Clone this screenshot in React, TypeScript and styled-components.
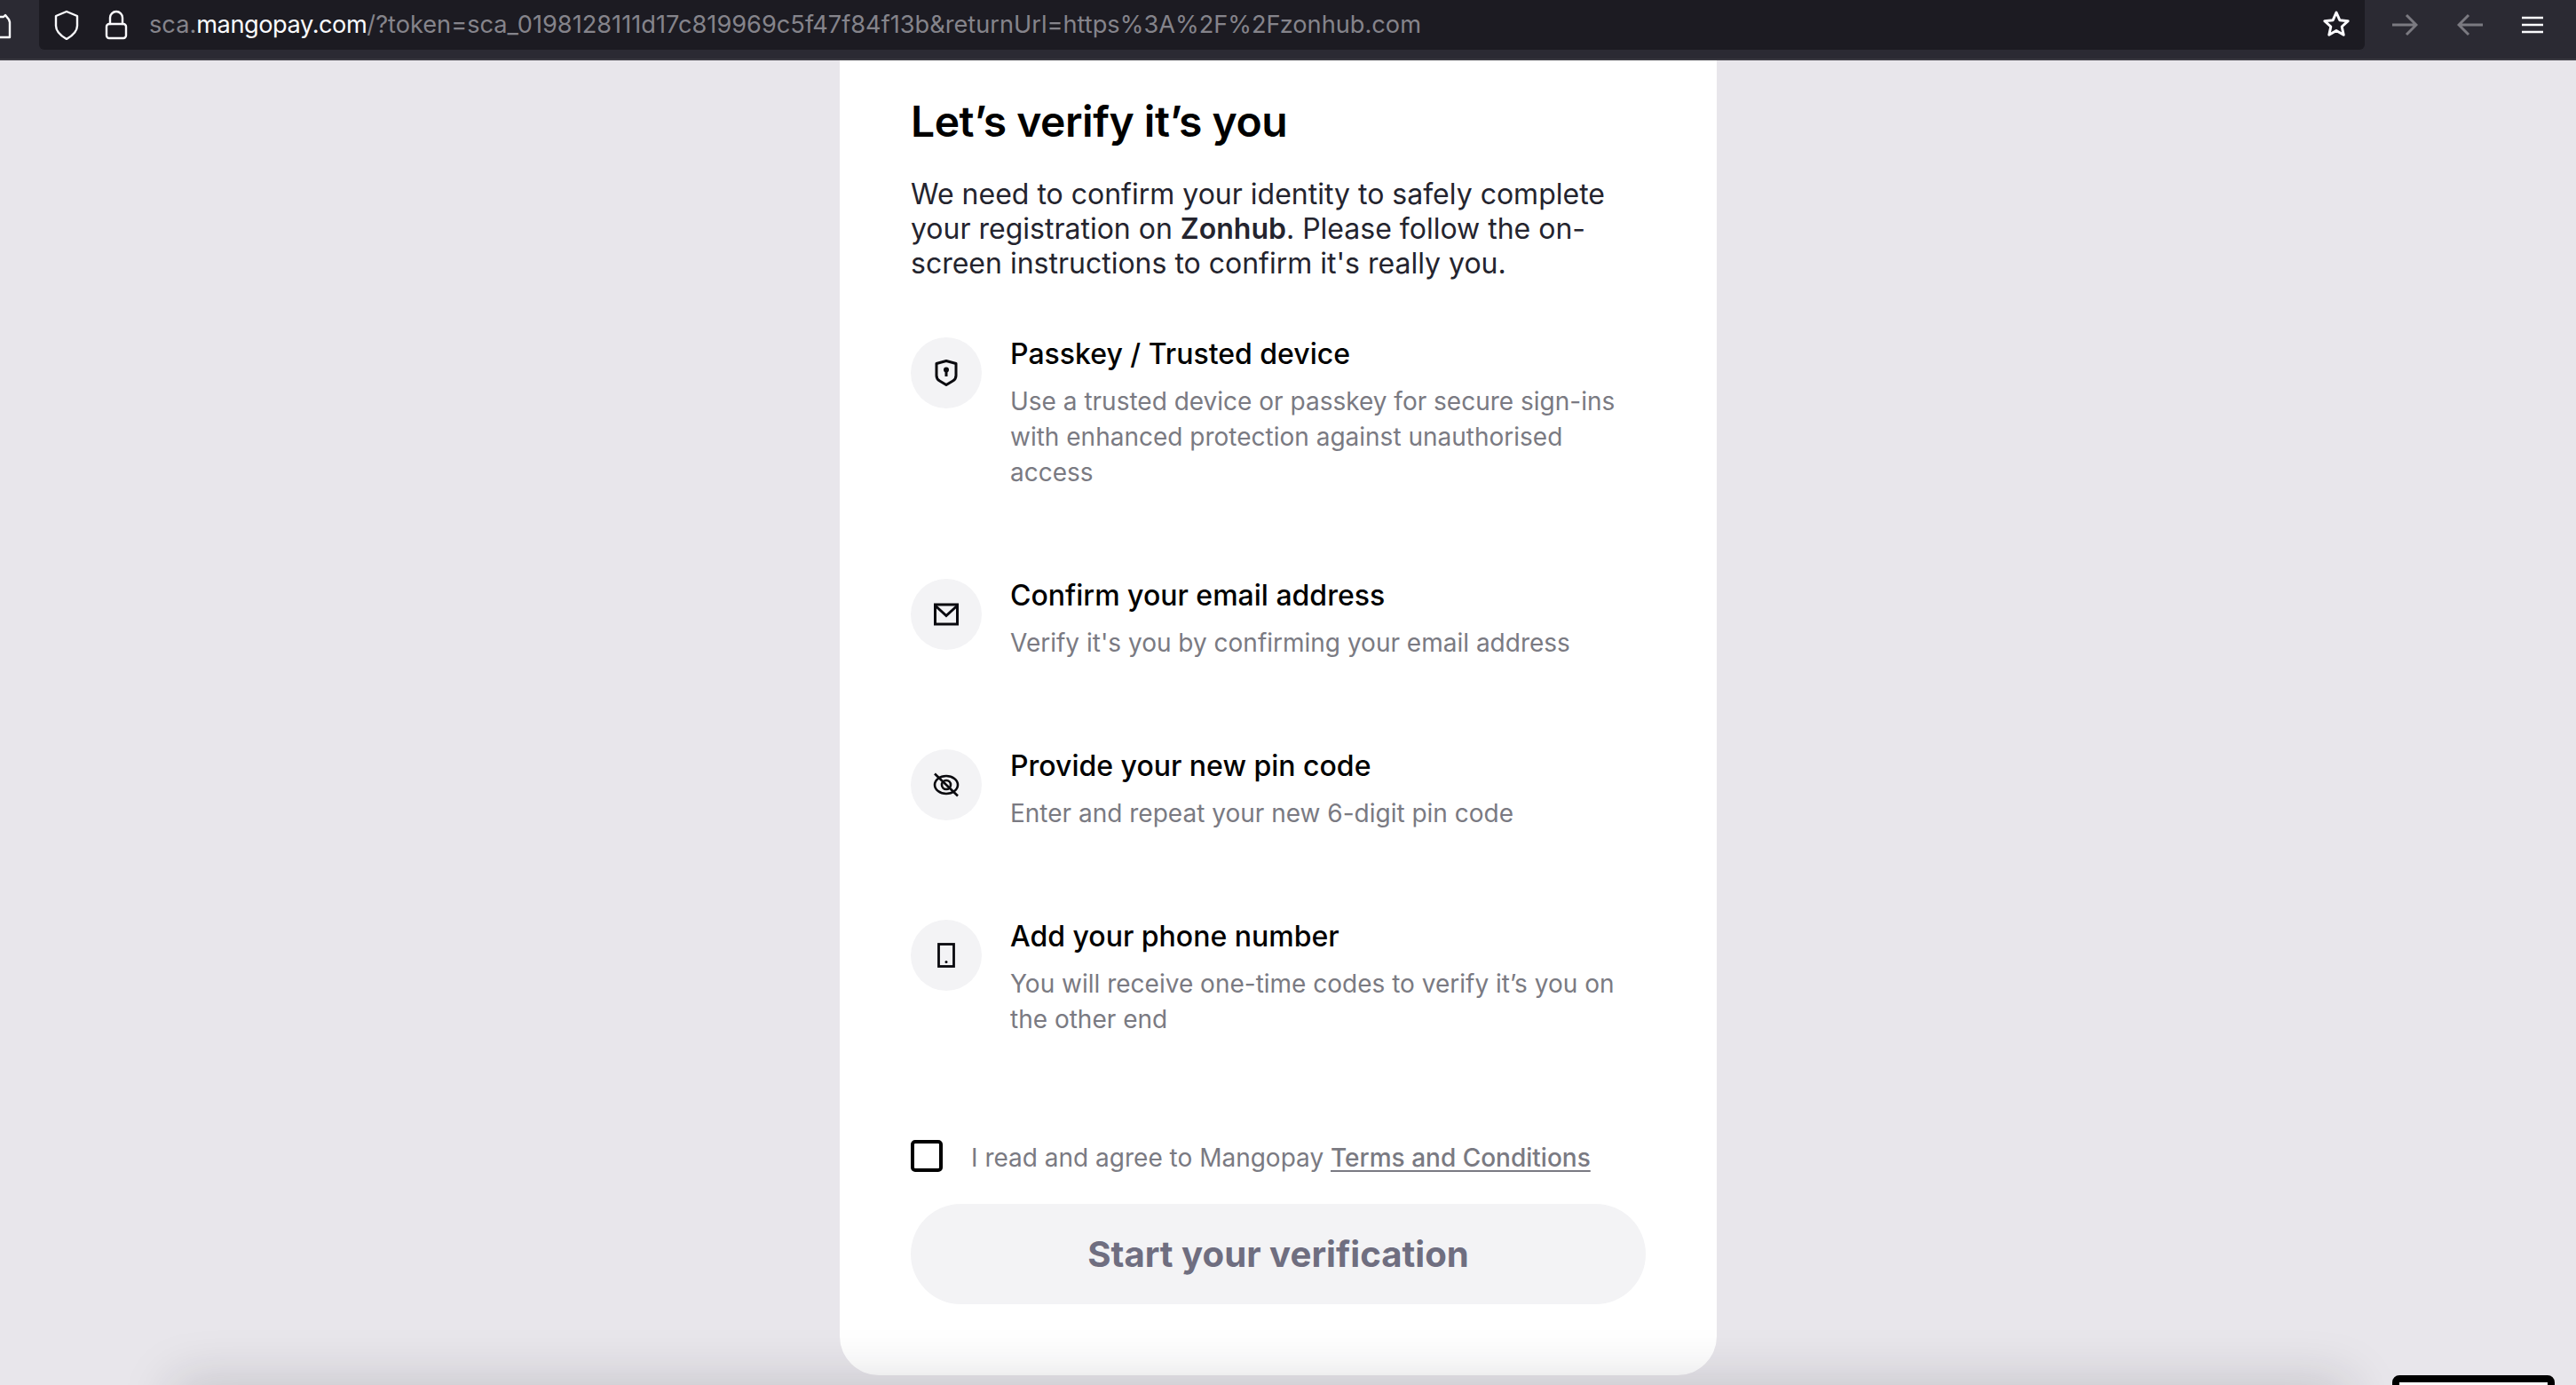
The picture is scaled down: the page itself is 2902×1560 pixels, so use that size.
import styled, { createGlobalStyle } from 'styled-components';

const GlobalStyle = createGlobalStyle`
  html, body {
    margin: 0;
    height: 100%;
    overflow: hidden;
    background: #e8e6eb;
  }
  * {
    box-sizing: border-box;
  }
`;

const Screen = styled.div`
  position: relative;
  width: 2902px;
  height: 1560px;
  overflow: hidden;
  display: flex;
  flex-direction: column;
  font-family: Inter, 'Liberation Sans', sans-serif;
`;

const Toolbar = styled.header`
  flex: none;
  height: 68px;
  padding-bottom: 10px;
  display: flex;
  align-items: stretch;
  background: #2b2a33;
  border-bottom: 2px solid #3a3941;
  color: #fbfbfe;
`;

const LeftEdge = styled.div`
  width: 44px;
  display: flex;
  align-items: center;
  svg {
    display: block;
  }
`;

const UrlBar = styled.div`
  width: 2620px;
  display: flex;
  align-items: center;
  padding: 0 15px 0 16px;
  background: #1c1b22;
  border-radius: 0 0 6px 6px;
`;

const UrlIcon = styled.svg`
  flex: none;
  fill: none;
  stroke: currentColor;
  stroke-width: 2.4;
  stroke-linejoin: round;
  stroke-linecap: round;
`;

const LockIcon = styled(UrlIcon)`
  margin-left: 28px;
`;

const UrlText = styled.div`
  flex: 1;
  margin: -2px 0 0 24px;
  font-size: 27.2px;
  color: #85848b;
  white-space: nowrap;
  b {
    font-weight: 400;
    letter-spacing: -0.45px;
    color: #fbfbfe;
  }
`;

const NavButtons = styled.div`
  flex: 1;
  display: flex;
  align-items: center;
  padding-left: 30px;
  gap: 44px;
`;

const NavIcon = styled.svg<{ $dim?: boolean }>`
  flex: none;
  fill: none;
  stroke: ${p => (p.$dim ? '#7b7a81' : '#fbfbfe')};
  stroke-width: 3;
`;

const MenuIcon = styled(NavIcon)`
  margin-left: -2px;
  stroke-width: 2.6;
`;

const Page = styled.main`
  flex: 1;
  min-height: 0;
  display: flex;
  justify-content: center;
  padding-right: 22px;
`;

const Card = styled.section`
  width: 988px;
  height: 1481px;
  padding: 40px 80px 0;
  background: #fff;
  border-radius: 0 0 44px 44px;
`;

const Title = styled.h1`
  margin: 0;
  font-size: 48px;
  line-height: 58px;
  font-weight: 600;
  letter-spacing: -0.45px;
  color: #000;
`;

const Intro = styled.p`
  margin: 33px 0 0;
  font-size: 32px;
  line-height: 39px;
  font-weight: 400;
  color: #24242e;
  b {
    font-weight: 600;
  }
`;

const Steps = styled.div`
  margin-top: 64px;
  display: flex;
  flex-direction: column;
  gap: 100px;
`;

const Step = styled.div`
  display: flex;
  gap: 32px;
`;

const IconCircle = styled.div`
  flex: none;
  width: 80px;
  height: 80px;
  border-radius: 50%;
  background: #f3f3f5;
  display: flex;
  align-items: center;
  justify-content: center;
  color: #0a0a0f;
`;

const StepBody = styled.div`
  min-width: 0;
`;

const StepTitle = styled.div`
  margin-top: -1px;
  margin-bottom: 13px;
  font-size: 32px;
  line-height: 40px;
  font-weight: 500;
  color: #000;
`;

const StepText = styled.div`
  font-size: 28px;
  line-height: 40px;
  color: #7a7a82;
`;

const Consent = styled.label`
  margin-top: 116px;
  display: flex;
  align-items: center;
  gap: 32px;
  height: 36px;
  font-size: 28px;
  color: #7a7a82;
  a {
    color: #7a7a82;
    font-weight: 500;
    text-decoration: underline;
    text-underline-offset: 4px;
    text-decoration-thickness: 2px;
  }
`;

const ConsentText = styled.span`
  margin-top: 4px;
`;

const Box = styled.span`
  flex: none;
  width: 36px;
  height: 36px;
  border: 4.5px solid #000;
  border-radius: 5px;
`;

const StartButton = styled.button`
  display: block;
  width: 100%;
  height: 113px;
  margin-top: 36px;
  border: none;
  border-radius: 57px;
  background: #f3f3f5;
  font-family: inherit;
  font-size: 40.2px;
  font-weight: 650;
  color: #6f6e80;
`;

const BottomShadow = styled.div`
  position: absolute;
  left: 200px;
  right: 260px;
  bottom: -50px;
  height: 50px;
  box-shadow: 0 0 60px 4px rgba(30, 28, 40, 0.18);
  pointer-events: none;
`;

const CornerBox = styled.div`
  position: absolute;
  left: 2695px;
  top: 1549px;
  width: 183px;
  height: 40px;
  border: 8px solid #000;
  border-radius: 8px;
  background: #fff;
`;

const steps = [
  {
    title: 'Passkey / Trusted device',
    text: (
      <>
        Use a trusted device or passkey for secure sign-ins
        <br />
        with enhanced protection against unauthorised
        <br />
        access
      </>
    ),
    icon: (
      <svg width="28" height="32" viewBox="0 0 28 32" fill="none" stroke="currentColor" strokeWidth="3">
        <path d="M3 5.500 14 2.500l11 3V19c0 3-1 4.500-3.500 6L14 29.500 6.500 25C4 23.500 3 22 3 19Z" strokeLinejoin="round" />
        <circle cx="14" cy="12.500" r="3" fill="currentColor" stroke="none" />
        <path d="M14 13v7" />
      </svg>
    ),
  },
  {
    title: 'Confirm your email address',
    text: "Verify it's you by confirming your email address",
    icon: (
      <svg width="28" height="26" viewBox="0 0 28 26" fill="none" stroke="currentColor" strokeWidth="3">
        <rect x="1.500" y="2" width="25" height="22" />
        <path d="m2 3.500 12 11 12-11" />
      </svg>
    ),
  },
  {
    title: 'Provide your new pin code',
    text: 'Enter and repeat your new 6-digit pin code',
    icon: (
      <svg width="30" height="28" viewBox="0 0 30 28" fill="none" stroke="currentColor" strokeWidth="2.600">
        <ellipse cx="15" cy="14" rx="13" ry="10" />
        <circle cx="15" cy="14" r="5" />
        <path d="M2 1.500 28 26.500" />
      </svg>
    ),
  },
  {
    title: 'Add your phone number',
    text: (
      <>
        You will receive one-time codes to verify it’s you on
        <br />
        the other end
      </>
    ),
    icon: (
      <svg width="20" height="28" viewBox="0 0 20 28" fill="none" stroke="currentColor" strokeWidth="2.800">
        <rect x="1.500" y="1.500" width="17" height="25" />
        <circle cx="10" cy="21.500" r="1.500" fill="currentColor" stroke="none" />
      </svg>
    ),
  },
];

export default function App() {
  return (
    <Screen>
      <GlobalStyle />
      <Toolbar>
        <LeftEdge>
          <svg width="14" height="34" viewBox="0 0 14 34" fill="none" stroke="#fbfbfe" strokeWidth="2.400">
            <path d="M-6 8h10l2-2 4 5 1 3v17H-6" strokeLinejoin="round" />
          </svg>
        </LeftEdge>
        <UrlBar>
          <UrlIcon width="30" height="34" viewBox="0 0 30 34">
            <path d="M15 2 27 7v11c0 6-5 11-12 15C8 29 3 24 3 18V7Z" />
          </UrlIcon>
          <LockIcon width="26" height="34" viewBox="0 0 26 34">
            <path d="M6 16V9a7 7 0 0 1 14 0v7" />
            <rect x="2" y="16" width="22" height="16" rx="3" />
          </LockIcon>
          <UrlText>
            sca.<b>mangopay.com</b>/?token=sca_0198128111d17c819969c5f47f84f13b&amp;returnUrl=https%3A%2F%2Fzonhub.com
          </UrlText>
          <NavIcon width="34" height="34" viewBox="0 0 34 34">
            <path d="m17 3 3.800 8.700 9.400 1-7 6.300 2 9.300L17 23.500l-8.200 4.800 2-9.300-7-6.300 9.400-1Z" strokeLinejoin="round" />
          </NavIcon>
        </UrlBar>
        <NavButtons>
          <NavIcon $dim width="30" height="26" viewBox="0 0 30 26">
            <path d="M1 13h27M17 2l11 11-11 11" />
          </NavIcon>
          <NavIcon $dim width="30" height="26" viewBox="0 0 30 26">
            <path d="M29 13H2M13 2 2 13l11 11" />
          </NavIcon>
          <MenuIcon width="26" height="22" viewBox="0 0 26 22">
            <path d="M1 3h24M1 11h24M1 19h24" />
          </MenuIcon>
        </NavButtons>
      </Toolbar>
      <Page>
        <Card>
          <Title>Let’s verify it’s you</Title>
          <Intro>
            We need to confirm your identity to safely complete
            <br />
            your registration on <b>Zonhub</b>. Please follow the on-
            <br />
            screen instructions to confirm it's really you.
          </Intro>
          <Steps>
            {steps.map(step => (
              <Step key={step.title}>
                <IconCircle>{step.icon}</IconCircle>
                <StepBody>
                  <StepTitle>{step.title}</StepTitle>
                  <StepText>{step.text}</StepText>
                </StepBody>
              </Step>
            ))}
          </Steps>
          <Consent>
            <Box />
            <ConsentText>
              I read and agree to Mangopay <a>Terms and Conditions</a>
            </ConsentText>
          </Consent>
          <StartButton type="button">Start your verification</StartButton>
        </Card>
      </Page>
      <BottomShadow />
      <CornerBox />
    </Screen>
  );
}
